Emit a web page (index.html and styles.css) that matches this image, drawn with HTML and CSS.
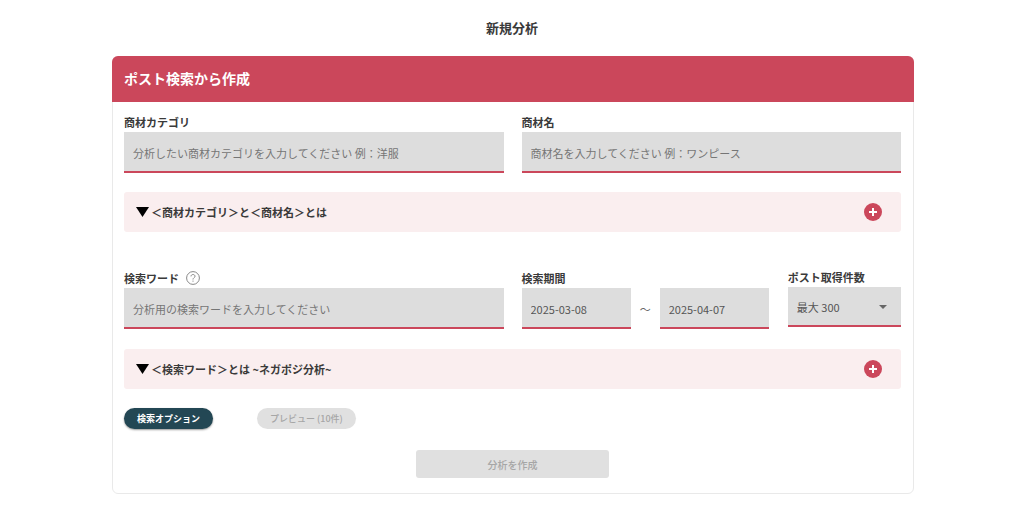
FILE: index.html
```html
<!DOCTYPE html>
<html lang="ja">
<head>
<meta charset="utf-8">
<meta name="viewport" content="width=device-width, initial-scale=1">
<title>新規分析</title>
<link rel="stylesheet" href="styles.css">
</head>
<body>
<h1 class="page-title">新規分析</h1>
<main class="page">
  <form class="card">
    <h2 class="card-header">ポスト検索から作成</h2>
    <div class="card-body">
      <div class="columns">
        <div class="field">
          <label class="label" for="category">商材カテゴリ</label>
          <input class="control" id="category" type="text" placeholder="分析したい商材カテゴリを入力してください 例：洋服">
        </div>
        <div class="field">
          <label class="label" for="product">商材名</label>
          <input class="control" id="product" type="text" placeholder="商材名を入力してください 例：ワンピース">
        </div>
      </div>

      <button class="banner" type="button">
        <svg class="marker" viewBox="0 0 13 10" aria-hidden="true"><path d="M0 0h13L6.500 10z"/></svg>
        <span class="banner-text">＜商材カテゴリ＞と＜商材名＞とは</span>
        <svg class="plus" viewBox="0 0 18 18" aria-hidden="true"><circle cx="9" cy="9" r="9"/><path d="M9 5v8M5 9h8"/></svg>
      </button>

      <div class="columns search">
        <div class="field">
          <div class="label-row">
            <label class="label" for="word">検索ワード</label>
            <svg class="help" viewBox="0 0 14 14" role="img" aria-label="ヘルプ"><circle cx="7" cy="7" r="6.4"/><path d="M5 5.400C5 4.200 5.900 3.500 7 3.500s2 .7 2 1.800C9 6.600 7 6.800 7 8.500"/><path d="M7 9.600v1.100"/></svg>
          </div>
          <input class="control" id="word" type="text" placeholder="分析用の検索ワードを入力してください">
        </div>
        <div class="conditions">
          <div class="field period">
            <label class="label" for="from">検索期間</label>
            <div class="range">
              <input class="control" id="from" type="text" value="2025-03-08">
              <span class="tilde">～</span>
              <input class="control" type="text" value="2025-04-07" aria-label="検索期間の終了日">
            </div>
          </div>
          <div class="field count">
            <label class="label" for="count">ポスト取得件数</label>
            <div class="select">
              <select class="control" id="count"><option>最大 300</option></select>
              <svg class="caret" viewBox="0 0 8 4" aria-hidden="true"><path d="M0 0h8L4 4z"/></svg>
            </div>
          </div>
        </div>
      </div>

      <button class="banner" type="button">
        <svg class="marker" viewBox="0 0 13 10" aria-hidden="true"><path d="M0 0h13L6.500 10z"/></svg>
        <span class="banner-text">＜検索ワード＞とは ~ネガポジ分析~</span>
        <svg class="plus" viewBox="0 0 18 18" aria-hidden="true"><circle cx="9" cy="9" r="9"/><path d="M9 5v8M5 9h8"/></svg>
      </button>

      <div class="actions">
        <button class="pill pill-primary" type="button">検索オプション</button>
        <button class="pill" type="button" disabled>プレビュー (10件)</button>
      </div>
      <button class="submit" type="submit" disabled>分析を作成</button>
    </div>
  </form>
</main>
</body>
</html>
```
FILE: styles.css
```css
*, *::before, *::after { box-sizing: border-box; }

body {
  margin: 0;
  background: #fff;
  color: #3a3a3a;
  font: 11px/20px "Noto Sans CJK JP", sans-serif;
}

button, input, select { font: inherit; color: inherit; }

.page-title {
  margin: 0;
  padding: 18px 0;
  font-size: 13px;
  line-height: 20px;
  font-weight: 700;
  text-align: center;
}

.page { padding: 0 110px 18px 112px; }

.card {
  border: 1px solid #e9e9e9;
  border-radius: 6px;
}

.card-header {
  margin: -1px -1px 0;
  padding: 11px 12px 13px;
  border-radius: 6px 6px 0 0;
  background: #cb475b;
  color: #fff;
  font-size: 14px;
  line-height: 22px;
  font-weight: 700;
}

.card-body {
  display: flex;
  flex-direction: column;
  padding: 10px 12px 15px 11px;
}

.columns {
  display: grid;
  grid-template-columns: 1fr 1fr;
  gap: 18px;
  margin-bottom: 19px;
}

.search { margin: 36px 0 20px; }

.field { min-width: 0; }

.label {
  display: block;
  font-weight: 700;
}

.label-row {
  display: flex;
  align-items: center;
  gap: 7px;
}

.help {
  width: 14px;
  height: 14px;
  fill: none;
  stroke: #888;
  stroke-width: 1;
}

.control {
  display: block;
  width: 100%;
  height: 41px;
  padding: 2px 9px 0;
  border: 0;
  border-bottom: 2px solid #cb475b;
  border-radius: 0;
  outline: 0;
  background: #ddd;
  color: #555;
  appearance: none;
}

.control::placeholder { color: #757575; opacity: 1; }

.conditions {
  display: grid;
  grid-template-columns: 247fr 113fr;
  gap: 19px;
  align-items: start;
}

.range {
  display: flex;
  align-items: center;
}

.range .control {
  flex: 1;
  min-width: 0;
  padding-top: 3px;
}

.tilde {
  width: 29px;
  color: #666;
  text-align: center;
}

.count .label { line-height: 19px; }

.select { position: relative; }

.select .control { height: 40px; }

.caret {
  position: absolute;
  top: 18px;
  right: 14px;
  width: 8px;
  height: 4px;
  fill: #666;
  pointer-events: none;
}

.banner {
  display: flex;
  align-items: center;
  height: 40px;
  padding: 0 19px 0 12px;
  border: 0;
  border-radius: 3px;
  background: #faeeef;
  font-weight: 700;
  text-align: left;
}

.marker {
  width: 13px;
  height: 10px;
  margin-right: 2px;
  fill: #000;
}

.banner-text { flex: 1; }

.plus {
  width: 18px;
  height: 18px;
  fill: #cb475b;
}

.plus path { stroke: #fff; stroke-width: 2; }

.actions {
  display: flex;
  gap: 44px;
  margin: 19px 0 21px;
}

.pill {
  height: 21px;
  padding: 0 13px;
  border: 0;
  border-radius: 11px;
  background: #e0e0e0;
  color: #a6a6a6;
  font-size: 9px;
  line-height: 20px;
  font-weight: 500;
}

.pill-primary {
  background: #234754;
  box-shadow: 0 1px 2px rgba(0, 0, 0, 0.4);
  color: #fff;
  font-weight: 700;
}

.submit {
  align-self: center;
  width: 193px;
  height: 28px;
  padding: 2px 0 0;
  border: 0;
  border-radius: 3px;
  background: #e0e0e0;
  color: #a6a6a6;
  font-size: 10px;
  font-weight: 500;
}
```
